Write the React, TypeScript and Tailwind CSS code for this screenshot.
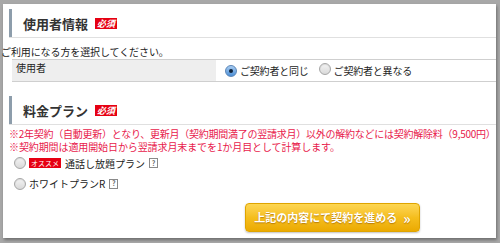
import React from "react";

const font = { fontFamily: '"Noto Sans CJK JP", "Noto Sans", sans-serif' };

function Radio({ checked }: { checked?: boolean }) {
  if (checked) {
    return (
      <span className="inline-flex h-[12px] w-[12px] shrink-0 items-center justify-center rounded-full border border-[#5b86b8] bg-gradient-to-b from-[#a9cdf2] to-[#4b8fd6]">
        <span className="h-[4px] w-[4px] rounded-full bg-[#10233a]" />
      </span>
    );
  }
  return (
    <span className="inline-block h-[12px] w-[12px] shrink-0 rounded-full border border-[#a6a6a6] bg-gradient-to-b from-[#f4f4f4] to-[#d9d9d9] shadow-[inset_0_1px_1px_rgba(0,0,0,0.1)]" />
  );
}

function Help() {
  return (
    <span className="ml-[4px] inline-flex h-[10px] w-[9px] items-center justify-center border border-[#8a8a8a] text-[7px] font-bold leading-none text-[#666]">
      ?
    </span>
  );
}

function SectionHeader({ title }: { title: string }) {
  return (
    <div className="ml-[6px] flex h-[29px] items-center border-b border-[#e0e0e0]">
      <div className="flex h-full items-center border-l-[3px] border-[#8d9dab] pl-[11px] pt-[1px]">
        <span className="text-[13px] font-bold leading-none text-[#333]">{title}</span>
        <span className="ml-[7px] inline-flex h-[11px] w-[22px] items-center justify-center bg-[#e60012] text-[9px] font-bold italic leading-none text-white">
          必須
        </span>
      </div>
    </div>
  );
}

export default function App() {
  return (
    <div className="h-[243px] w-[500px] bg-[#a8a8a8] pl-[3px] pt-[4px]" style={font}>
      <div className="h-[234px] w-[493px] bg-white shadow-[1px_2px_3px_rgba(0,0,0,0.35)]">
        <div className="pt-[5px]">
          <SectionHeader title="使用者情報" />
        </div>
        <div className="mt-[7px] -ml-[2px] text-[10px] leading-[14px] tracking-[-0.1px] text-[#222]">
          ご利用になる方を選択してください。
        </div>
        <div className="ml-[9px] flex h-[23px] border-y border-[#cfcfcf] text-[10px] text-[#222]">
          <div className="w-[204px] bg-[#eeeeee] pl-[4px] pt-[1px] leading-[14px]">使用者</div>
          <div className="flex items-center pl-[9px] tracking-[-0.2px]">
            <Radio checked />
            <span className="ml-[3px]">ご契約者と同じ</span>
            <span className="ml-[10px]">
              <Radio />
            </span>
            <span className="ml-[3px]">ご契約者と異なる</span>
          </div>
        </div>
        <div className="mt-[14px]">
          <SectionHeader title="料金プラン" />
        </div>
        <div className="mt-[2px] pl-[6px] text-[10px] leading-[13px] text-[#e8194b]">
          <div className="h-[13px] whitespace-nowrap tracking-[-0.25px]">※2年契約（自動更新）となり、更新月（契約期間満了の翌請求月）以外の解約などには契約解除料（9,500円）</div>
          <div className="h-[13px] whitespace-nowrap tracking-[-0.1px]">※契約期間は適用開始日から翌請求月末までを1か月目として計算します。</div>
        </div>
        <div className="pl-[11px] text-[10px] text-[#222]">
          <div className="flex h-[20px] items-center">
            <Radio />
            <span className="ml-[3px] inline-flex h-[10px] items-center bg-[#e60012] px-[2px] text-[7px] leading-none text-white">
              オススメ
            </span>
            <span className="ml-[4px]">通話し放題プラン</span>
            <Help />
          </div>
          <div className="flex h-[21px] items-center">
            <Radio />
            <span className="ml-[3px]">ホワイトプランR</span>
            <Help />
          </div>
        </div>
        <div className="ml-[242px] mt-[9px] flex h-[29px] w-[175px] items-center justify-center rounded-[4px] border border-[#dfa400] bg-gradient-to-b from-[#fdd651] via-[#f5be1c] to-[#ebaa00] text-[11px] font-bold text-white shadow-[0_1px_2px_rgba(0,0,0,0.25)] [text-shadow:0_1px_1px_rgba(150,90,0,0.6)]">
          <span>上記の内容にて契約を進める</span>
          <span className="ml-[6px] text-[14px] leading-none">»</span>
        </div>
      </div>
    </div>
  );
}
